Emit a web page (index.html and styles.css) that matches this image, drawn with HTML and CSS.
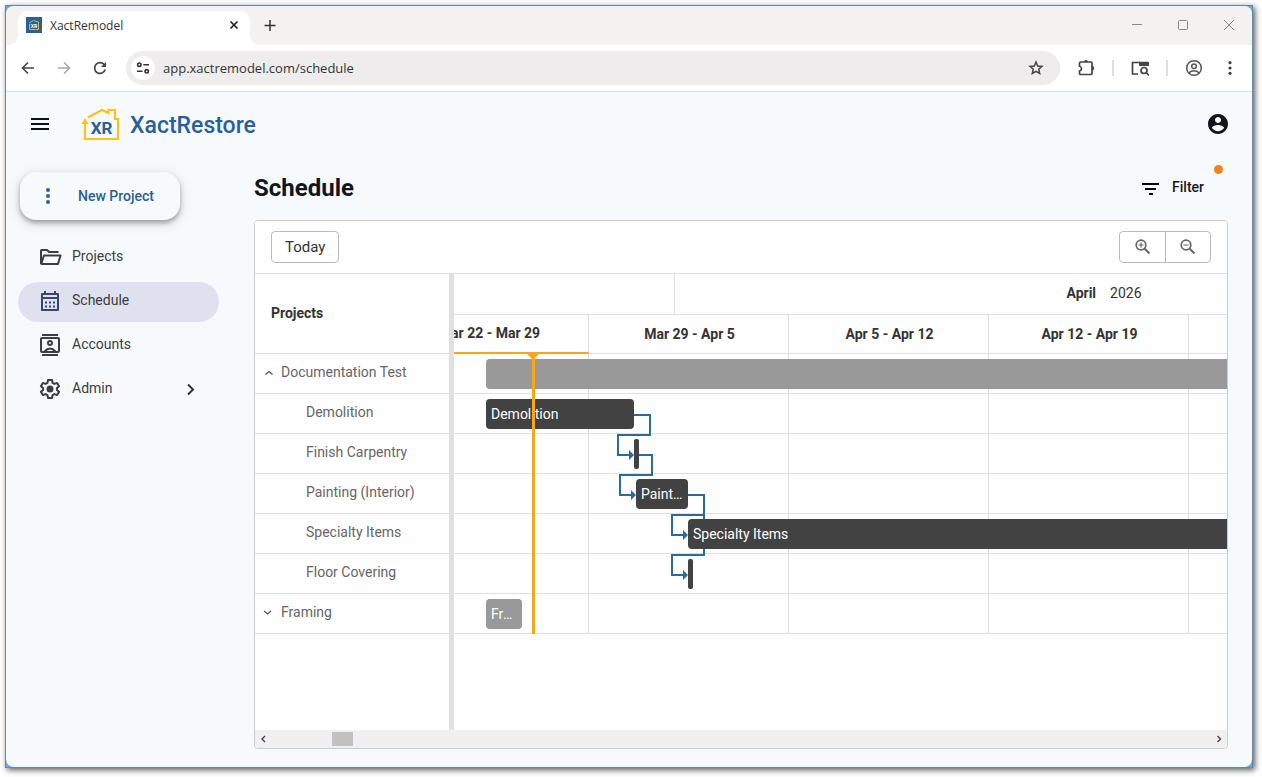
FILE: index.html
```html
<!DOCTYPE html>
<html lang="en">

<head>
	<meta charset="UTF-8">
	<meta name="viewport" content="width=device-width, initial-scale=1">
	<title>XactRemodel</title>
	<link rel="stylesheet" href="styles.css">
</head>

<body>
	<div class="frame">
		<div class="browser">

			<!-- tab strip -->
			<div class="tabstrip">
				<div class="tab">
					<svg class="favicon" width="16" height="16" viewBox="0 0 16 16">
						<rect width="16" height="16" fill="#2a6099" />
						<path d="M3 6 7.5 3.6 12.5 5V12.5H3.5V7" fill="none" stroke="#d8b92c" />
						<text x="8" y="10.5" text-anchor="middle" class="favicon-text">XR</text>
					</svg>
					<span class="tab-title">XactRemodel</span>
					<button class="icon-btn" aria-label="Close tab">
						<svg width="16" height="16" viewBox="0 0 16 16"><path d="m4.5 4.5 7 7m0-7-7 7" stroke="#222" stroke-width="1.7" /></svg>
					</button>
				</div>
				<button class="icon-btn new-tab" aria-label="New tab">
					<svg width="16" height="16" viewBox="0 0 16 16"><path d="M8 2v11M2.500 7.500h11" stroke="#333" stroke-width="1.5" /></svg>
				</button>
				<div class="window-btns">
					<button class="icon-btn" aria-label="Minimize">
						<svg width="16" height="16" viewBox="0 0 16 16"><path d="M3 6.500h10" stroke="#888" /></svg>
					</button>
					<button class="icon-btn" aria-label="Maximize">
						<svg width="16" height="16" viewBox="0 0 16 16"><rect x="3.5" y="2.5" width="9" height="9" rx="1" fill="none" stroke="#888" /></svg>
					</button>
					<button class="icon-btn" aria-label="Close window">
						<svg width="16" height="16" viewBox="0 0 16 16"><path d="m3 2 10 10M13 2 3 12" stroke="#888" /></svg>
					</button>
				</div>
			</div>

			<!-- address bar -->
			<div class="toolbar">
				<div class="nav-btns">
					<button class="icon-btn" aria-label="Back">
						<svg width="16" height="16" viewBox="0 0 16 16"><path d="M14 8H3m5-5.5L2.5 8 8 13.5" fill="none" stroke="#444" stroke-width="1.6" /></svg>
					</button>
					<button class="icon-btn" aria-label="Forward">
						<svg width="16" height="16" viewBox="0 0 16 16"><path d="M2 8h11M8 2.500 13.500 8 8 13.500" fill="none" stroke="#aaa" stroke-width="1.6" /></svg>
					</button>
					<button class="icon-btn" aria-label="Reload">
						<svg width="16" height="16" viewBox="0 0 16 16"><path d="M13.200 9.500A5.400 5.400 0 1 1 12.500 5" fill="none" stroke="#444" stroke-width="1.7" /><path d="M14 2v5H9z" fill="#444" /></svg>
					</button>
				</div>
				<div class="address">
					<button class="icon-btn site-info" aria-label="View site information">
						<svg width="14" height="14" viewBox="0 0 14 14" fill="none" stroke="#333" stroke-width="1.600"><circle cx="3.300" cy="3.700" r="1.700" /><path d="M7.300 3.700H13M1 10.300h5.500" /><circle cx="10.700" cy="10.300" r="1.700" /></svg>
					</button>
					<input class="url" type="text" aria-label="Address" value="app.xactremodel.com/schedule">
					<button class="icon-btn" aria-label="Bookmark">
						<svg width="16" height="16" viewBox="0 0 16 16"><path d="m8 2 1.700 4 4.300.4-3.200 2.900.9 4.200L8 11.300l-3.700 2.200.9-4.200L2 6.400 6.300 6z" fill="none" stroke="#444" stroke-width="1.500" /></svg>
					</button>
				</div>
				<div class="tool-btns">
					<button class="icon-btn" aria-label="Extensions">
						<svg width="18" height="18" viewBox="0 0 18 18"><path d="M2.500 4.200Q2.500 3 3.700 3H14q1 0 1 1v10.500q0 1-1 1H3.700q-1.200 0-1.200-1.200V12q2-.4 2-2.300t-2-2.400z" fill="none" stroke="#444" stroke-width="1.700" /><path d="M7 3a2 2 0 0 1 4 0zM15 7a2.200 2.200 0 0 1 0 4.400z" fill="#444" /></svg>
					</button>
					<span class="divider"></span>
					<button class="icon-btn" aria-label="Search tabs">
						<svg width="18" height="18" viewBox="0 0 18 18"><path d="M7 15H1.500V3.500H9" fill="none" stroke="#444" stroke-width="1.700" /><path d="M8 2.700h9q1 0 1 1V7H8z" fill="#444" /><circle cx="13" cy="11.500" r="3" fill="none" stroke="#444" stroke-width="1.700" /><path d="m15 13.500 3 3" stroke="#444" stroke-width="1.700" /></svg>
					</button>
					<span class="divider"></span>
					<button class="icon-btn" aria-label="Profile">
						<svg width="18" height="18" viewBox="0 0 18 18" fill="none" stroke="#555" stroke-width="1.500"><circle cx="9" cy="9" r="7.300" /><circle cx="9" cy="7.200" r="2.300" /><path d="M3.800 13.800Q9 9.700 14.200 13.800" /></svg>
					</button>
					<button class="icon-btn" aria-label="Menu">
						<svg width="16" height="16" viewBox="0 0 16 16" fill="#444"><circle cx="8" cy="2.700" r="1.600" /><circle cx="8" cy="8" r="1.600" /><circle cx="8" cy="13.300" r="1.600" /></svg>
					</button>
				</div>
			</div>

			<!-- app -->
			<div class="app">
				<header class="app-header">
					<button class="icon-btn" aria-label="Toggle menu">
						<svg width="24" height="24" viewBox="0 0 24 24"><path d="M3 7h18M3 12h18M3 17h18" stroke="#111" stroke-width="2" /></svg>
					</button>
					<a class="brand" href="#">
						<svg width="38" height="36" viewBox="0 0 38 36">
							<path d="M3 14V31H36V11H33V2H26.500V5L20 2 6 9.500" fill="none" stroke="#fcc419" stroke-width="2.200" />
							<path d="m-.5 16 3.500-6 3.500 6z" fill="#fcc419" />
							<text x="19.500" y="26" text-anchor="middle" class="brand-mark">XR</text>
						</svg>
						<span>XactRestore</span>
					</a>
					<button class="icon-btn account" aria-label="Account">
						<svg width="24" height="24" viewBox="0 0 24 24"><path fill="#12161c" d="M12 2C6.480 2 2 6.480 2 12s4.480 10 10 10 10-4.480 10-10S17.520 2 12 2zm0 3c1.660 0 3 1.340 3 3s-1.340 3-3 3-3-1.340-3-3 1.340-3 3-3zm0 14.200c-2.500 0-4.710-1.280-6-3.220.03-1.990 4-3.080 6-3.080 1.990 0 5.970 1.090 6 3.080-1.290 1.940-3.500 3.220-6 3.220z" /></svg>
					</button>
				</header>

				<div class="app-body">
					<aside class="sidebar">
						<button class="new-project">
							<svg width="24" height="24" viewBox="0 0 24 24" fill="#2a6099"><circle cx="12" cy="6" r="2" /><circle cx="12" cy="12" r="2" /><circle cx="12" cy="18" r="2" /></svg>
							<span>New Project</span>
						</button>
						<nav class="menu">
							<a class="menu-item" href="#">
								<svg width="24" height="24" viewBox="0 0 24 24" fill="none" stroke="#3a3d42" stroke-width="2"><path d="M3 19V5.500Q3 5 3.500 5H9l2 2h9.500M3 19.500 6 10.500H22.500L20 19H3" stroke-linejoin="round" /></svg>
								<span>Projects</span>
							</a>
							<a class="menu-item active" href="#">
								<svg width="24" height="24" viewBox="0 0 24 24" fill="none" stroke="#3a4568" stroke-width="2"><path d="M4 5h16v16H4zM7 2v3M17 2v3" stroke-linejoin="round" /><path d="M4 9h16" /><path d="M7 13.500h10M7 17.500h10" stroke-dasharray="2 2" /></svg>
								<span>Schedule</span>
							</a>
							<a class="menu-item" href="#">
								<svg width="24" height="24" viewBox="0 0 24 24" fill="none" stroke="#3a3d42" stroke-width="2"><path d="M4 2h16M4 22h16" /><rect x="3" y="5" width="18" height="14" rx="1" /><circle cx="12" cy="10" r="2" /><path d="M6.500 18.500Q12 12.500 17.500 18.500" /></svg>
								<span>Accounts</span>
							</a>
							<a class="menu-item" href="#">
								<svg width="24" height="24" viewBox="0 0 24 24"><path fill="none" stroke="#3a3d42" stroke-width="2" stroke-linejoin="round" d="M10 3h4l.5 2.800 1.900 1.100 2.700-1 2 3.400-2.200 1.800v1.800l2.200 1.800-2 3.400-2.700-1-1.900 1.100L14 21h-4l-.5-2.800-1.900-1.100-2.700 1-2-3.400 2.200-1.800v-1.800L2.900 9.300l2-3.400 2.700 1 1.900-1.100z" /><circle cx="12" cy="12" r="3.500" fill="#3a3d42" /></svg>
								<span>Admin</span>
								<svg class="menu-arrow" width="24" height="24" viewBox="0 0 24 24"><path d="m9 7.500 5 5-5 5" fill="none" stroke="#333" stroke-width="2" /></svg>
							</a>
						</nav>
					</aside>

					<main class="main">
						<div class="page-head">
							<h1>Schedule</h1>
							<button class="filter">
								<svg width="24" height="24" viewBox="0 0 24 24"><path d="M3 8h17M6 13h11M10 18h4" stroke="#000" stroke-width="2" /></svg>
								<span>Filter</span>
								<span class="filter-dot"></span>
							</button>
						</div>

						<section class="gantt">
							<div class="gantt-tools">
								<button class="today-btn">Today</button>
								<div class="zoom">
									<button aria-label="Zoom in">
										<svg width="20" height="20" viewBox="0 0 20 20" fill="none" stroke="#666"><circle cx="8" cy="8" r="4.800" stroke-width="1.700" /><path d="m11.500 11.500 5 5" stroke-width="2" /><path d="M5.500 8h5M8 5.500v5" stroke-width="1.200" /></svg>
									</button>
									<button aria-label="Zoom out">
										<svg width="20" height="20" viewBox="0 0 20 20" fill="none" stroke="#666"><circle cx="8" cy="8" r="4.800" stroke-width="1.700" /><path d="m11.500 11.500 5 5" stroke-width="2" /><path d="M5.500 8h5" stroke-width="1.200" /></svg>
									</button>
								</div>
							</div>

							<div class="gantt-body">
								<table class="tasks">
									<thead>
										<tr><th>Projects</th></tr>
									</thead>
									<tbody>
										<tr><td class="group"><div>
											<button class="toggle" aria-label="Collapse"><svg width="10" height="10" viewBox="0 0 10 10"><path d="m2.500 7.500 3.500-3 3.500 3" fill="none" stroke="#555" stroke-width="1.300" /></svg></button>
											<span>Documentation Test</span></div></td></tr>
										<tr><td>Demolition</td></tr>
										<tr><td>Finish Carpentry</td></tr>
										<tr><td>Painting (Interior)</td></tr>
										<tr><td>Specialty Items</td></tr>
										<tr><td>Floor Covering</td></tr>
										<tr><td class="group"><div>
											<button class="toggle" aria-label="Expand"><svg width="10" height="10" viewBox="0 0 10 10"><path d="m1 4 3.500 3L8 4" fill="none" stroke="#555" stroke-width="1.300" /></svg></button>
											<span>Framing</span></div></td></tr>
									</tbody>
								</table>

								<div class="timeline">
									<div class="canvas">
										<div class="months">
											<div class="month" style="width: 286px"></div>
											<div class="month" style="width: 857px"><b>April</b><span>2026</span></div>
										</div>
										<div class="weeks">
											<div class="week current">Mar 22 - Mar 29</div>
											<div class="week">Mar 29 - Apr 5</div>
											<div class="week">Apr 5 - Apr 12</div>
											<div class="week">Apr 12 - Apr 19</div>
											<div class="week"></div>
										</div>
										<div class="rows">
											<!-- dependency lines -->
											<svg class="links" width="1143" height="280" viewBox="0 0 1143 280">
												<g fill="none" stroke="#2a6b9c" stroke-width="2">
													<path d="M245 61h16v20h-32v20h14" />
													<path d="M250 101h13v20h-32v20h14" />
													<path d="M299 141h16v20h-32v20h14" />
													<path d="M315 161v40h-32v20h14" />
												</g>
												<path fill="#2a6b9c" d="m240 96 5 5-5 5zM242 136l5 5-5 5zM294 176l5 5-5 5zM294 216l5 5-5 5z" />
											</svg>
											<div class="row"><div class="bar summary" style="margin-left: 97px; width: 1000px"></div></div>
											<div class="row"><div class="bar" style="margin-left: 97px; width: 148px">Demolition</div></div>
											<div class="row"><div class="bar thin" style="margin-left: 245px; width: 5px"></div></div>
											<div class="row"><div class="bar" style="margin-left: 247px; width: 52px">Painting (Interior)</div></div>
											<div class="row"><div class="bar" style="margin-left: 299px; width: 800px">Specialty Items</div></div>
											<div class="row"><div class="bar thin" style="margin-left: 299px; width: 5px"></div></div>
											<div class="row"><div class="bar summary" style="margin-left: 97px; width: 36px">Framing</div></div>
											<div class="now" style="left: 143px"></div>
										</div>
									</div>
								</div>
							</div>

							<div class="scrollbar">
								<button class="icon-btn" aria-label="Scroll left"><svg width="8" height="8" viewBox="0 0 8 8"><path d="M5 1 2 4l3 3" fill="none" stroke="#444" stroke-width="1.400" /></svg></button>
								<div class="track"><div class="thumb"></div></div>
								<button class="icon-btn" aria-label="Scroll right"><svg width="8" height="8" viewBox="0 0 8 8"><path d="m2.500 1 3 3-3 3" fill="none" stroke="#444" stroke-width="1.400" /></svg></button>
							</div>
						</section>
					</main>
				</div>
			</div>
		</div>
	</div>
</body>

</html>
```

FILE: styles.css
```css
* {
	box-sizing: border-box;
}

body {
	margin: 0;
	padding: 5px 9px 9px 5px;
	background: #fff;
	font-family: Roboto, "Liberation Sans", sans-serif;
	font-size: 14px;
	line-height: 20px;
	color: #333;
}

button {
	font: inherit;
	color: inherit;
	padding: 0;
	border: none;
	background: none;
	cursor: pointer;
}

a {
	color: inherit;
	text-decoration: none;
}

svg {
	display: block;
	flex: none;
}

.icon-btn {
	display: flex;
	align-items: center;
	justify-content: center;
	flex: none;
}

/* browser window */
.frame {
	display: flex;
	min-height: calc(100vh - 14px);
	border: 1px solid #6388a6;
	background: #6fa8d8;
	box-shadow: 2px 2px 6px rgba(0, 0, 0, 0.65);
}

.browser {
	display: flex;
	flex-direction: column;
	flex: 1;
	min-width: 0;
	border-radius: 8px;
	overflow: hidden;
	background: #f6fafd;
}

.tabstrip {
	display: flex;
	align-items: center;
	height: 39px;
	padding-left: 12px;
	background: #f3f2f1;
}

.tab {
	display: flex;
	align-items: center;
	align-self: flex-end;
	gap: 8px;
	width: 232px;
	height: 34px;
	padding: 0 8px 6px;
	border-radius: 10px 10px 0 0;
	background: #fff;
	position: relative;
}

.tab::before,
.tab::after {
	content: "";
	position: absolute;
	bottom: 0;
	width: 10px;
	height: 10px;
}

.tab::before {
	left: -10px;
	background: radial-gradient(circle at 0 0, transparent 10px, #fff 10px);
}

.tab::after {
	right: -10px;
	background: radial-gradient(circle at 100% 0, transparent 10px, #fff 10px);
}

.favicon-text {
	font-size: 5px;
	font-weight: bold;
	fill: #fff;
}

.tab-title {
	flex: 1;
	padding-top: 2px;
	font-family: "Open Sans", "Noto Sans", sans-serif;
	font-size: 12px;
}

.new-tab {
	margin-left: 12px;
}

.window-btns {
	display: flex;
	gap: 30px;
	margin-left: auto;
	padding-right: 15px;
}

.toolbar {
	display: flex;
	align-items: center;
	height: 47px;
	padding: 0 14px;
	border-bottom: 1px solid #dcdfe1;
	background: #fff;
}

.nav-btns {
	display: flex;
	gap: 20px;
}

.address {
	display: flex;
	align-items: center;
	flex: 1;
	height: 34px;
	margin: 0 17px 0 18px;
	padding: 0 16px 0 5px;
	border-radius: 17px;
	background: #eeeced;
}

.site-info {
	width: 24px;
	height: 24px;
	border-radius: 50%;
	background: #fff;
}

.url {
	flex: 1;
	min-width: 0;
	margin: 0 8px;
	padding: 0;
	border: none;
	outline: none;
	background: none;
	font-family: "Open Sans", "Noto Sans", sans-serif;
	font-size: 13px;
	color: #333;
}

.tool-btns {
	display: flex;
	align-items: center;
	gap: 17px;
}

.tool-btns .icon-btn:last-child {
	margin-left: 2px;
}

.divider {
	width: 2px;
	height: 16px;
	background: #ddd;
}

/* app */
.app {
	display: flex;
	flex-direction: column;
	flex: 1;
}

.app-header {
	display: flex;
	align-items: center;
	height: 64px;
	padding: 0 22px;
}

.brand {
	display: flex;
	align-items: center;
	gap: 10px;
	margin-left: 30px;
	font-size: 23px;
	line-height: 36px;
	font-weight: 500;
	color: #2a6099;
	padding-top: 4px;
}

.brand-mark {
	font-size: 17px;
	font-weight: bold;
	fill: #2a6099;
}

.account {
	margin-left: auto;
}

.app-body {
	display: flex;
	flex: 1;
}

.sidebar {
	flex: none;
	width: 248px;
	padding: 16px 35px 0 12px;
}

.new-project {
	display: flex;
	align-items: center;
	gap: 18px;
	width: 160px;
	height: 48px;
	margin-left: 2px;
	padding: 0 16px;
	border-radius: 16px;
	background: #f6fafd;
	box-shadow: 0 3px 5px rgba(0, 0, 0, 0.3), 0 3px 14px rgba(0, 0, 0, 0.13);
	font-weight: 500;
	color: #2a6099;
}

.menu {
	display: flex;
	flex-direction: column;
	gap: 4px;
	margin-top: 18px;
}

.menu-item {
	display: flex;
	align-items: center;
	gap: 10px;
	height: 40px;
	padding: 0 16px 2px 20px;
	border-radius: 20px;
	color: #3a3d42;
}

.menu-item span {
	padding-bottom: 2px;
}

.menu-item.active {
	background: #dfe2ee;
}

.menu-arrow {
	margin-left: auto;
}

.main {
	display: flex;
	flex-direction: column;
	flex: 1;
	min-width: 0;
	padding: 0 24px 18px 0;
}

.page-head {
	display: flex;
	align-items: center;
	justify-content: space-between;
	height: 64px;
}

h1 {
	margin: 0;
	font-size: 24px;
	line-height: 32px;
	font-weight: bold;
	color: #12161c;
}

.filter {
	display: flex;
	align-items: center;
	gap: 9px;
	padding: 0 24px 0 0;
	font-weight: 500;
	color: #12161c;
	position: relative;
}

.filter span {
	padding-bottom: 2px;
}

.filter .filter-dot {
	position: absolute;
	top: -11px;
	right: 5px;
	width: 9px;
	height: 9px;
	padding: 0;
	border-radius: 50%;
	background: #ee8322;
}

/* gantt */
.gantt {
	display: flex;
	flex-direction: column;
	flex: 1;
	border: 1px solid #ccc;
	border-radius: 4px;
	overflow: hidden;
	background: #fefefe;
}

.gantt-tools {
	display: flex;
	align-items: center;
	justify-content: space-between;
	height: 53px;
	padding: 0 16px;
	border-bottom: 1px solid #e0e0e0;
	background: #fff;
}

.today-btn {
	height: 32px;
	padding: 0 13px;
	border: 1px solid #bbb;
	border-radius: 4px;
	font-size: 15px;
}

.zoom {
	display: flex;
	border: 1px solid #bbb;
	border-radius: 4px;
}

.zoom button {
	display: flex;
	align-items: center;
	justify-content: center;
	width: 45px;
	height: 30px;
}

.zoom button + button {
	border-left: 1px solid #bbb;
}

.gantt-body {
	display: flex;
	flex: 1;
}

.tasks {
	align-self: flex-start;
	flex: none;
	width: 194px;
	border-spacing: 0;
	color: #666;
}

.tasks th {
	height: 80px;
	padding: 0 16px 2px;
	border-bottom: 1px solid #e0e0e0;
	text-align: left;
	color: #333;
}

.tasks td {
	height: 40px;
	padding: 0 0 4px 51px;
	border-bottom: 1px solid #e0e0e0;
}

.tasks td.group {
	padding-left: 8px;
}

.group div {
	display: flex;
	align-items: center;
	gap: 8px;
}

.timeline {
	flex: 1;
	min-width: 0;
	border-left: 5px solid #e0e0e0;
	overflow: hidden;
}

/* the canvas is scrolled 65px into the first week */
.canvas {
	width: 1143px;
	margin-left: -65px;
}

.months,
.weeks {
	display: flex;
}

.month,
.week {
	display: flex;
	align-items: center;
	justify-content: center;
	flex: none;
	padding-left: 2px;
	border-right: 1px solid #e0e0e0;
	border-bottom: 1px solid #e0e0e0;
}

.month {
	gap: 14px;
	height: 41px;
	padding-bottom: 2px;
}

.week {
	width: 200px;
	height: 39px;
	font-weight: bold;
}

.week.current {
	padding-bottom: 1px;
	border-bottom: 2px solid #faa61a;
}

.rows {
	position: relative;
	background: repeating-linear-gradient(to right, transparent 0, transparent 199px, #e0e0e0 199px, #e0e0e0 200px);
}

.row {
	height: 40px;
	padding-top: 5px;
	border-bottom: 1px solid #e0e0e0;
}

.bar {
	position: relative;
	height: 30px;
	padding: 0 5px;
	border-radius: 4px;
	overflow: hidden;
	text-overflow: ellipsis;
	white-space: nowrap;
	line-height: 30px;
	background: #424242;
	color: #fff;
}

.bar.summary {
	background: #999;
}

.bar.thin {
	padding: 0;
	border-radius: 2px;
}

.links {
	position: absolute;
	top: 0;
	left: 0;
}

/* today marker */
.now {
	position: absolute;
	top: -1px;
	bottom: 0;
	width: 3px;
	background: #faa61a;
}

.now::before {
	content: "";
	position: absolute;
	left: -6px;
	border: solid transparent;
	border-width: 7px 7px 0;
	border-top-color: #faa61a;
}

.scrollbar {
	display: flex;
	height: 18px;
	background: #f0f0f0;
}

.scrollbar .icon-btn {
	width: 17px;
}

.track {
	flex: 1;
	padding: 2px 0 2px 60px;
}

.thumb {
	width: 21px;
	height: 14px;
	background: #c1c1c1;
}
```
